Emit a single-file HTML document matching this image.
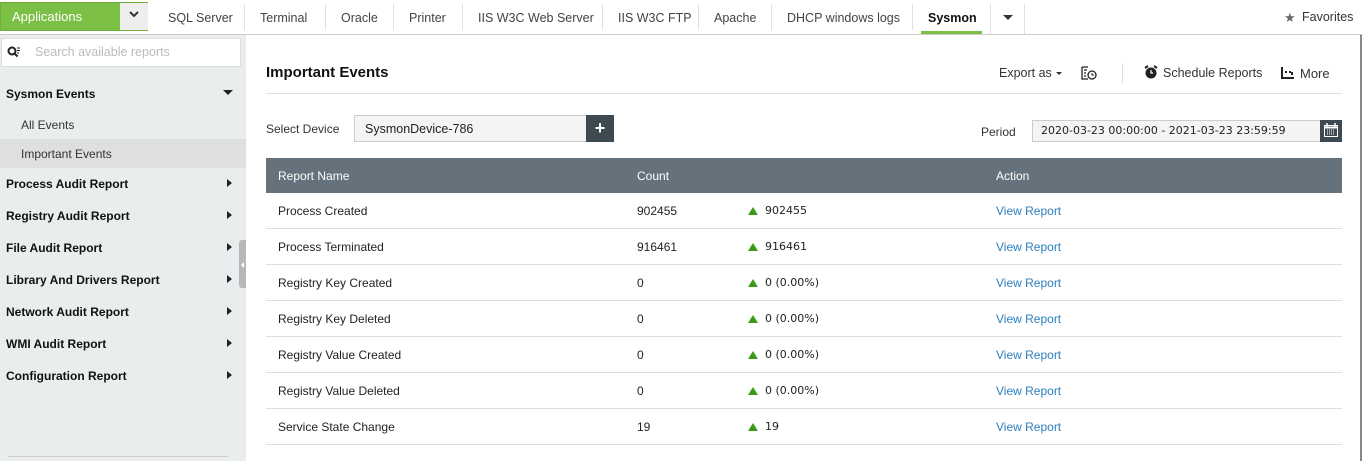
<!DOCTYPE html>
<html><head><meta charset="utf-8"><style>
*{margin:0;padding:0;box-sizing:border-box}
body{width:1363px;height:461px;overflow:hidden;background:#fff;font-family:"Liberation Sans",sans-serif;font-size:12px;color:#222;position:relative}
.a{position:absolute;white-space:nowrap}
.tab{position:absolute;top:11px;font-size:12.5px;color:#444}
.sep{position:absolute;top:4px;width:1px;height:26px;background:#e2e2e2}
.side{font-weight:bold;font-size:12px;color:#111}
.arr{position:absolute;width:0;height:0;border-top:4px solid transparent;border-bottom:4px solid transparent;border-left:5px solid #222}
.row{position:absolute;left:266px;width:1076px;height:36px;border-bottom:1px solid #ddd}
.row span{position:absolute;top:11px;font-size:12px}
.tr{font-family:"DejaVu Sans",sans-serif;font-size:11px!important}
.tri{position:absolute;top:14px;left:482px;width:0;height:0;border-left:5px solid transparent;border-right:5px solid transparent;border-bottom:8px solid #3a9a1a}
.lk{color:#2a7fc0;left:730px}
</style></head><body>
<!-- top bar -->
<div class="a" style="left:0;top:2px;width:148px;height:29px;background:#7cbf45;border:1px solid #6fae3b"></div>
<div class="a" style="left:12px;top:9px;color:#fff;font-size:13px">Applications</div>
<div class="a" style="left:120px;top:3px;width:28px;height:27px;background:#eee"></div>
<svg class="a" style="left:128px;top:11px" width="12" height="8"><path d="M2 1l4 4 4-4" stroke="#333" stroke-width="2" fill="none"/></svg>
<div class="tab" style="left:168px">SQL Server</div><div class="sep" style="left:244px"></div>
<div class="tab" style="left:260px">Terminal</div><div class="sep" style="left:325px"></div>
<div class="tab" style="left:341px">Oracle</div><div class="sep" style="left:393px"></div>
<div class="tab" style="left:409px">Printer</div><div class="sep" style="left:462px"></div>
<div class="tab" style="left:478px">IIS W3C Web Server</div><div class="sep" style="left:602px"></div>
<div class="tab" style="left:618px">IIS W3C FTP</div><div class="sep" style="left:698px"></div>
<div class="tab" style="left:714px">Apache</div><div class="sep" style="left:771px"></div>
<div class="tab" style="left:787px">DHCP windows logs</div><div class="sep" style="left:912px"></div>
<div class="tab" style="left:928px;font-weight:bold;color:#111">Sysmon</div>
<div class="a" style="left:921px;top:31px;width:61px;height:3px;background:#7cbf45"></div>
<div class="sep" style="left:990px;height:30px"></div>
<div class="a" style="left:1003px;top:15px;border-left:5px solid transparent;border-right:5px solid transparent;border-top:5px solid #333"></div>
<div class="sep" style="left:1024px;height:30px"></div>
<div class="a" style="left:1284px;top:10px;font-size:13px;color:#666">★</div>
<div class="a" style="left:1302px;top:10px;font-size:12.5px;color:#333">Favorites</div>
<div class="a" style="left:0;top:34px;width:1363px;height:1px;background:#ccc"></div>
<div class="a" style="left:1360px;top:35px;width:2px;height:426px;background:#888"></div>
<!-- sidebar -->
<div class="a" style="left:0;top:35px;width:246px;height:426px;background:#eaedee"></div>
<div class="a" style="left:1px;top:38px;width:240px;height:29px;background:#fff;border:1px solid #ddd"></div>
<svg class="a" style="left:7px;top:46px" width="14" height="13"><circle cx="5" cy="5" r="3.5" stroke="#222" stroke-width="2" fill="none"/><path d="M7.5 7.5l3 3" stroke="#222" stroke-width="2"/><path d="M10 2h3M10 4.5h3M10 7h2" stroke="#222" stroke-width="1"/></svg>
<div class="a" style="left:35px;top:45px;color:#bbb;font-size:12.5px">Search available reports</div>
<div class="a side" style="left:6px;top:87px">Sysmon Events</div>
<div class="a" style="left:223px;top:90px;border-left:5px solid transparent;border-right:5px solid transparent;border-top:5px solid #222"></div>
<div class="a" style="left:21px;top:118px;color:#333">All Events</div>
<div class="a" style="left:0;top:139px;width:246px;height:29px;background:#dddfe0"></div>
<div class="a" style="left:21px;top:147px;color:#333">Important Events</div>
<div class="a side" style="left:6px;top:177px">Process Audit Report</div><div class="arr" style="left:227px;top:179px"></div>
<div class="a side" style="left:6px;top:209px">Registry Audit Report</div><div class="arr" style="left:227px;top:211px"></div>
<div class="a side" style="left:6px;top:241px">File Audit Report</div><div class="arr" style="left:227px;top:243px"></div>
<div class="a side" style="left:6px;top:273px">Library And Drivers Report</div><div class="arr" style="left:227px;top:275px"></div>
<div class="a side" style="left:6px;top:305px">Network Audit Report</div><div class="arr" style="left:227px;top:307px"></div>
<div class="a side" style="left:6px;top:337px">WMI Audit Report</div><div class="arr" style="left:227px;top:339px"></div>
<div class="a side" style="left:6px;top:369px">Configuration Report</div><div class="arr" style="left:227px;top:371px"></div>
<div class="a" style="left:8px;top:456px;width:220px;height:1px;background:#ccc"></div>
<div class="a" style="left:239px;top:240px;width:7px;height:48px;background:#b5b8ba;border-radius:3px 0 0 3px"></div>
<div class="a" style="left:241px;top:262px;border-top:3px solid transparent;border-bottom:3px solid transparent;border-right:3px solid #fff"></div>
<!-- header -->
<div class="a" style="left:266px;top:64px;font-size:15px;font-weight:bold;color:#111">Important Events</div>
<div class="a" style="left:999px;top:66px;font-size:12.5px;color:#333">Export as</div>
<div class="a" style="left:1056px;top:72px;border-left:3px solid transparent;border-right:3px solid transparent;border-top:3px solid #333"></div>
<svg class="a" style="left:1081px;top:66px" width="16" height="14"><path d="M1 1h6M1 1v12h6M3 4h3M3 7h2M3 10h2" stroke="#222" stroke-width="1.3" fill="none"/><circle cx="11" cy="9" r="4" stroke="#222" stroke-width="1.3" fill="none"/><path d="M11 7v2h2" stroke="#222" fill="none"/></svg>
<div class="a" style="left:1122px;top:63px;width:1px;height:20px;background:#ddd"></div>
<svg class="a" style="left:1144px;top:65px" width="14" height="14"><circle cx="7" cy="8" r="5.5" fill="#222"/><path d="M1 3l3-2M13 3l-3-2" stroke="#222" stroke-width="2"/><path d="M7 5v3h2" stroke="#fff" stroke-width="1.2" fill="none"/></svg>
<div class="a" style="left:1163px;top:66px;font-size:12.5px;color:#333">Schedule Reports</div>
<svg class="a" style="left:1281px;top:67px" width="14" height="12"><path d="M1 0v11h12M4 5h2M8 5h2M11 5v3" stroke="#222" stroke-width="2" fill="none"/></svg>
<div class="a" style="left:1300px;top:66px;font-size:13px;color:#333">More</div>
<div class="a" style="left:266px;top:93px;width:1076px;height:1px;background:#e0e0e0"></div>
<!-- device -->
<div class="a" style="left:266px;top:122px;color:#333">Select Device</div>
<div class="a" style="left:354px;top:115px;width:233px;height:27px;background:#f4f4f4;border:1px solid #ccc"></div>
<div class="a" style="left:365px;top:122px;font-size:12.5px;color:#222">SysmonDevice-786</div>
<div class="a" style="left:586px;top:115px;width:28px;height:27px;background:#3e4a52;color:#fff;font-size:18px;font-weight:bold;text-align:center;line-height:26px">+</div>
<div class="a" style="left:981px;top:125px;color:#333">Period</div>
<div class="a" style="left:1032px;top:120px;width:290px;height:22px;background:#f4f4f4;border:1px solid #ccc"></div>
<div class="a" style="left:1041px;top:124px;font-family:'DejaVu Sans',sans-serif;font-size:11px;color:#222">2020-03-23 00:00:00 - 2021-03-23 23:59:59</div>
<div class="a" style="left:1320px;top:120px;width:22px;height:22px;background:#3e4a52"></div>
<svg class="a" style="left:1323px;top:122px" width="16" height="16"><rect x="1.5" y="3.5" width="13" height="11" stroke="#fff" fill="none"/><path d="M1.5 5.5h13" stroke="#fff" stroke-width="2"/><path d="M4 1v4M12 1v4" stroke="#fff" stroke-width="1.5"/><path d="M4 8h8M4 10h8M4 12h8" stroke="#fff" stroke-dasharray="1 1"/></svg>
<!-- table -->
<div class="a" style="left:266px;top:158px;width:1076px;height:35px;background:#66727b"></div>
<div class="a" style="left:278px;top:169px;color:#fff">Report Name</div>
<div class="a" style="left:637px;top:169px;color:#fff">Count</div>
<div class="a" style="left:996px;top:169px;color:#fff">Action</div>
<div class="row" style="top:193px"><span style="left:12px">Process Created</span><span style="left:371px">902455</span><div class="tri"></div><span class="tr" style="left:499px">902455</span><span class="lk">View Report</span></div>
<div class="row" style="top:229px"><span style="left:12px">Process Terminated</span><span style="left:371px">916461</span><div class="tri"></div><span class="tr" style="left:499px">916461</span><span class="lk">View Report</span></div>
<div class="row" style="top:265px"><span style="left:12px">Registry Key Created</span><span style="left:371px">0</span><div class="tri"></div><span class="tr" style="left:499px">0 (0.00%)</span><span class="lk">View Report</span></div>
<div class="row" style="top:301px"><span style="left:12px">Registry Key Deleted</span><span style="left:371px">0</span><div class="tri"></div><span class="tr" style="left:499px">0 (0.00%)</span><span class="lk">View Report</span></div>
<div class="row" style="top:337px"><span style="left:12px">Registry Value Created</span><span style="left:371px">0</span><div class="tri"></div><span class="tr" style="left:499px">0 (0.00%)</span><span class="lk">View Report</span></div>
<div class="row" style="top:373px"><span style="left:12px">Registry Value Deleted</span><span style="left:371px">0</span><div class="tri"></div><span class="tr" style="left:499px">0 (0.00%)</span><span class="lk">View Report</span></div>
<div class="row" style="top:409px"><span style="left:12px">Service State Change</span><span style="left:371px">19</span><div class="tri"></div><span class="tr" style="left:499px">19</span><span class="lk">View Report</span></div>
</body></html>
